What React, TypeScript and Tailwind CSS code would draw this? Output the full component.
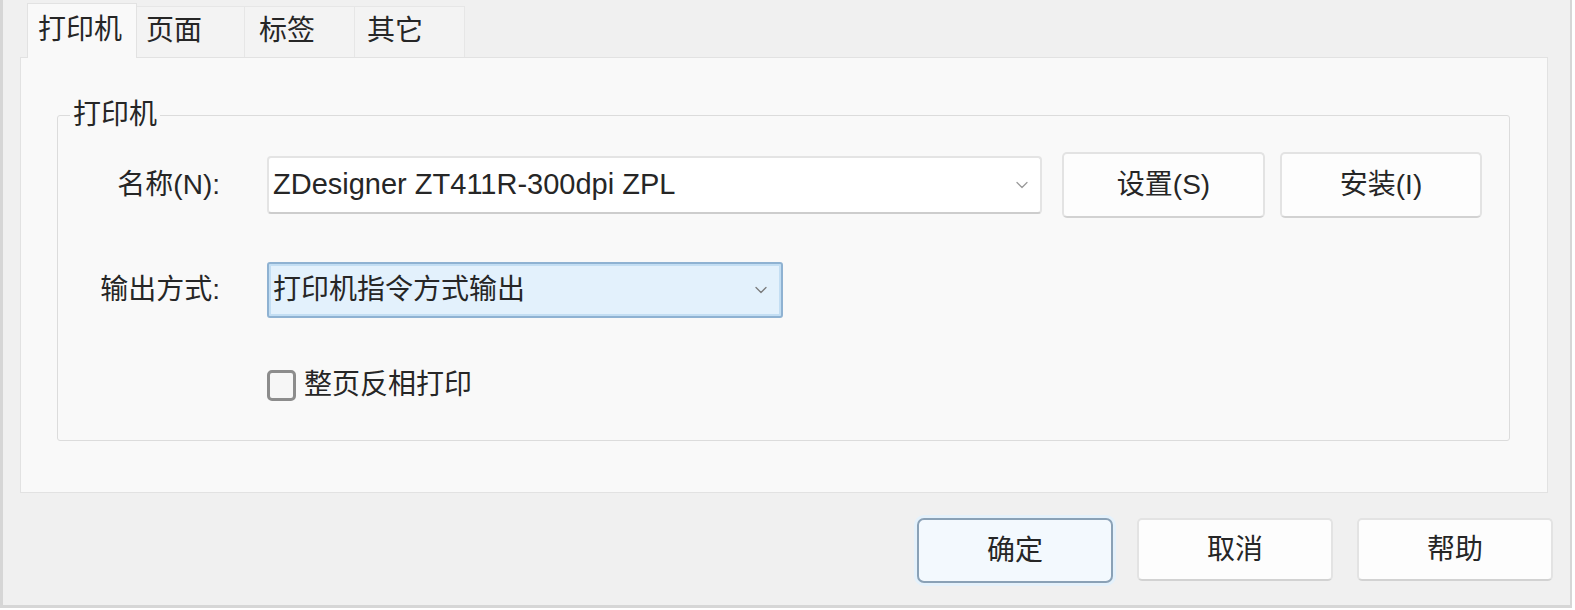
import { ChevronDown } from "lucide-react";

const tabs = [
  { label: "打印机", active: true, cls: "w-[110px] pl-[10px]" },
  { label: "页面", active: false, cls: "w-[108px] pl-[9px]" },
  { label: "标签", active: false, cls: "w-[110px] pl-[14px]" },
  { label: "其它", active: false, cls: "w-[110px] pl-[12px]" },
];

const Chevron = ({ className }: { className: string }) => (
  <ChevronDown className={className} size={20} strokeWidth={1.5} />
);

const App = () => {
  return (
    <div className="h-[610px] w-[1575px] bg-white font-['Liberation_Sans','Noto_Sans_CJK_SC',sans-serif] text-[28px] text-[#262626]">
      <div className="flex h-[608px] w-[1572px] flex-col border-b-[3px] border-l-[3px] border-r-2 border-[#d6d6d6] bg-[#f0f0f0]">
        {/* tab strip */}
        <div className="flex h-[57px] items-end pl-[24px]">
          {tabs.map((t) =>
            t.active ? (
              <div
                key={t.label}
                className={`relative z-10 -mb-px flex h-[55px] items-center border-x border-t border-[#e2e2e2] bg-[#f9f9f9] pb-[2px] ${t.cls}`}
              >
                {t.label}
              </div>
            ) : (
              <div
                key={t.label}
                className={`flex h-[51px] items-center border-r border-t border-[#e6e6e6] bg-[#f3f3f3] pb-[2px] ${t.cls}`}
              >
                {t.label}
              </div>
            )
          )}
        </div>

        {/* tab panel */}
        <div className="ml-[17px] h-[436px] w-[1528px] border border-[#e2e2e2] bg-[#f9f9f9] pl-[36px] pr-[37px] pt-[43px]">
          <fieldset className="h-[340px] rounded-[3px] border border-[#dcdcdc]">
            <legend className="ml-[12px] px-[3px] text-[28px] leading-[28px]">打印机</legend>

            {/* name row */}
            <div className="mt-[23px] flex items-center">
              <div className="w-[162px] text-right">名称(N):</div>
              <div className="ml-[47px] flex h-[58px] w-[775px] items-center justify-between rounded-[4px] border-2 border-[#e4e4e4] border-b-[#cdcdcd] bg-white pl-[4px] pr-[8px]">
                <span className="text-[29px]">ZDesigner ZT411R-300dpi ZPL</span>
                <Chevron className="text-[#9a9a9a]" />
              </div>
              <button className="ml-[20px] h-[66px] w-[203px] rounded-[5px] border-2 border-[#e3e3e3] border-b-[#d2d2d2] bg-[#fdfdfd]">
                设置(S)
              </button>
              <button className="ml-[15px] h-[66px] w-[202px] rounded-[5px] border-2 border-[#e3e3e3] border-b-[#d2d2d2] bg-[#fdfdfd]">
                安装(I)
              </button>
            </div>

            {/* output row */}
            <div className="mt-[44px] flex items-center">
              <div className="w-[162px] text-right">输出方式:</div>
              <div className="ml-[47px] flex h-[56px] w-[516px] items-center justify-between rounded-[3px] border-2 border-[#8fb2d2] bg-[#e3f1fc] pl-[4px] pr-[10px] shadow-[inset_0_0_0_2px_#c3def3]">
                <span>打印机指令方式输出</span>
                <Chevron className="text-[#7a7a7a]" />
              </div>
            </div>

            {/* checkbox row */}
            <label className="ml-[209px] mt-[46px] flex items-center">
              <span className="h-[31px] w-[29px] rounded-[5px] border-[3px] border-[#8c8c8c] bg-[#f6f6f6]" />
              <span className="ml-[8px]">整页反相打印</span>
            </label>
          </fieldset>
        </div>

        {/* dialog buttons */}
        <div className="flex flex-1 items-start justify-end gap-[24px] pr-[17px] pt-[25px]">
          <button className="h-[65px] w-[196px] rounded-[7px] border-2 border-[#8aa1b6] bg-[#f3f9fe] shadow-[0_0_0_3px_#e4f1fb]">
            确定
          </button>
          <button className="h-[63px] w-[196px] rounded-[5px] border-2 border-[#e3e3e3] border-b-[#d2d2d2] bg-[#fdfdfd]">
            取消
          </button>
          <button className="h-[63px] w-[196px] rounded-[5px] border-2 border-[#e3e3e3] border-b-[#d2d2d2] bg-[#fdfdfd]">
            帮助
          </button>
        </div>
      </div>
    </div>
  );
};

export default App;
